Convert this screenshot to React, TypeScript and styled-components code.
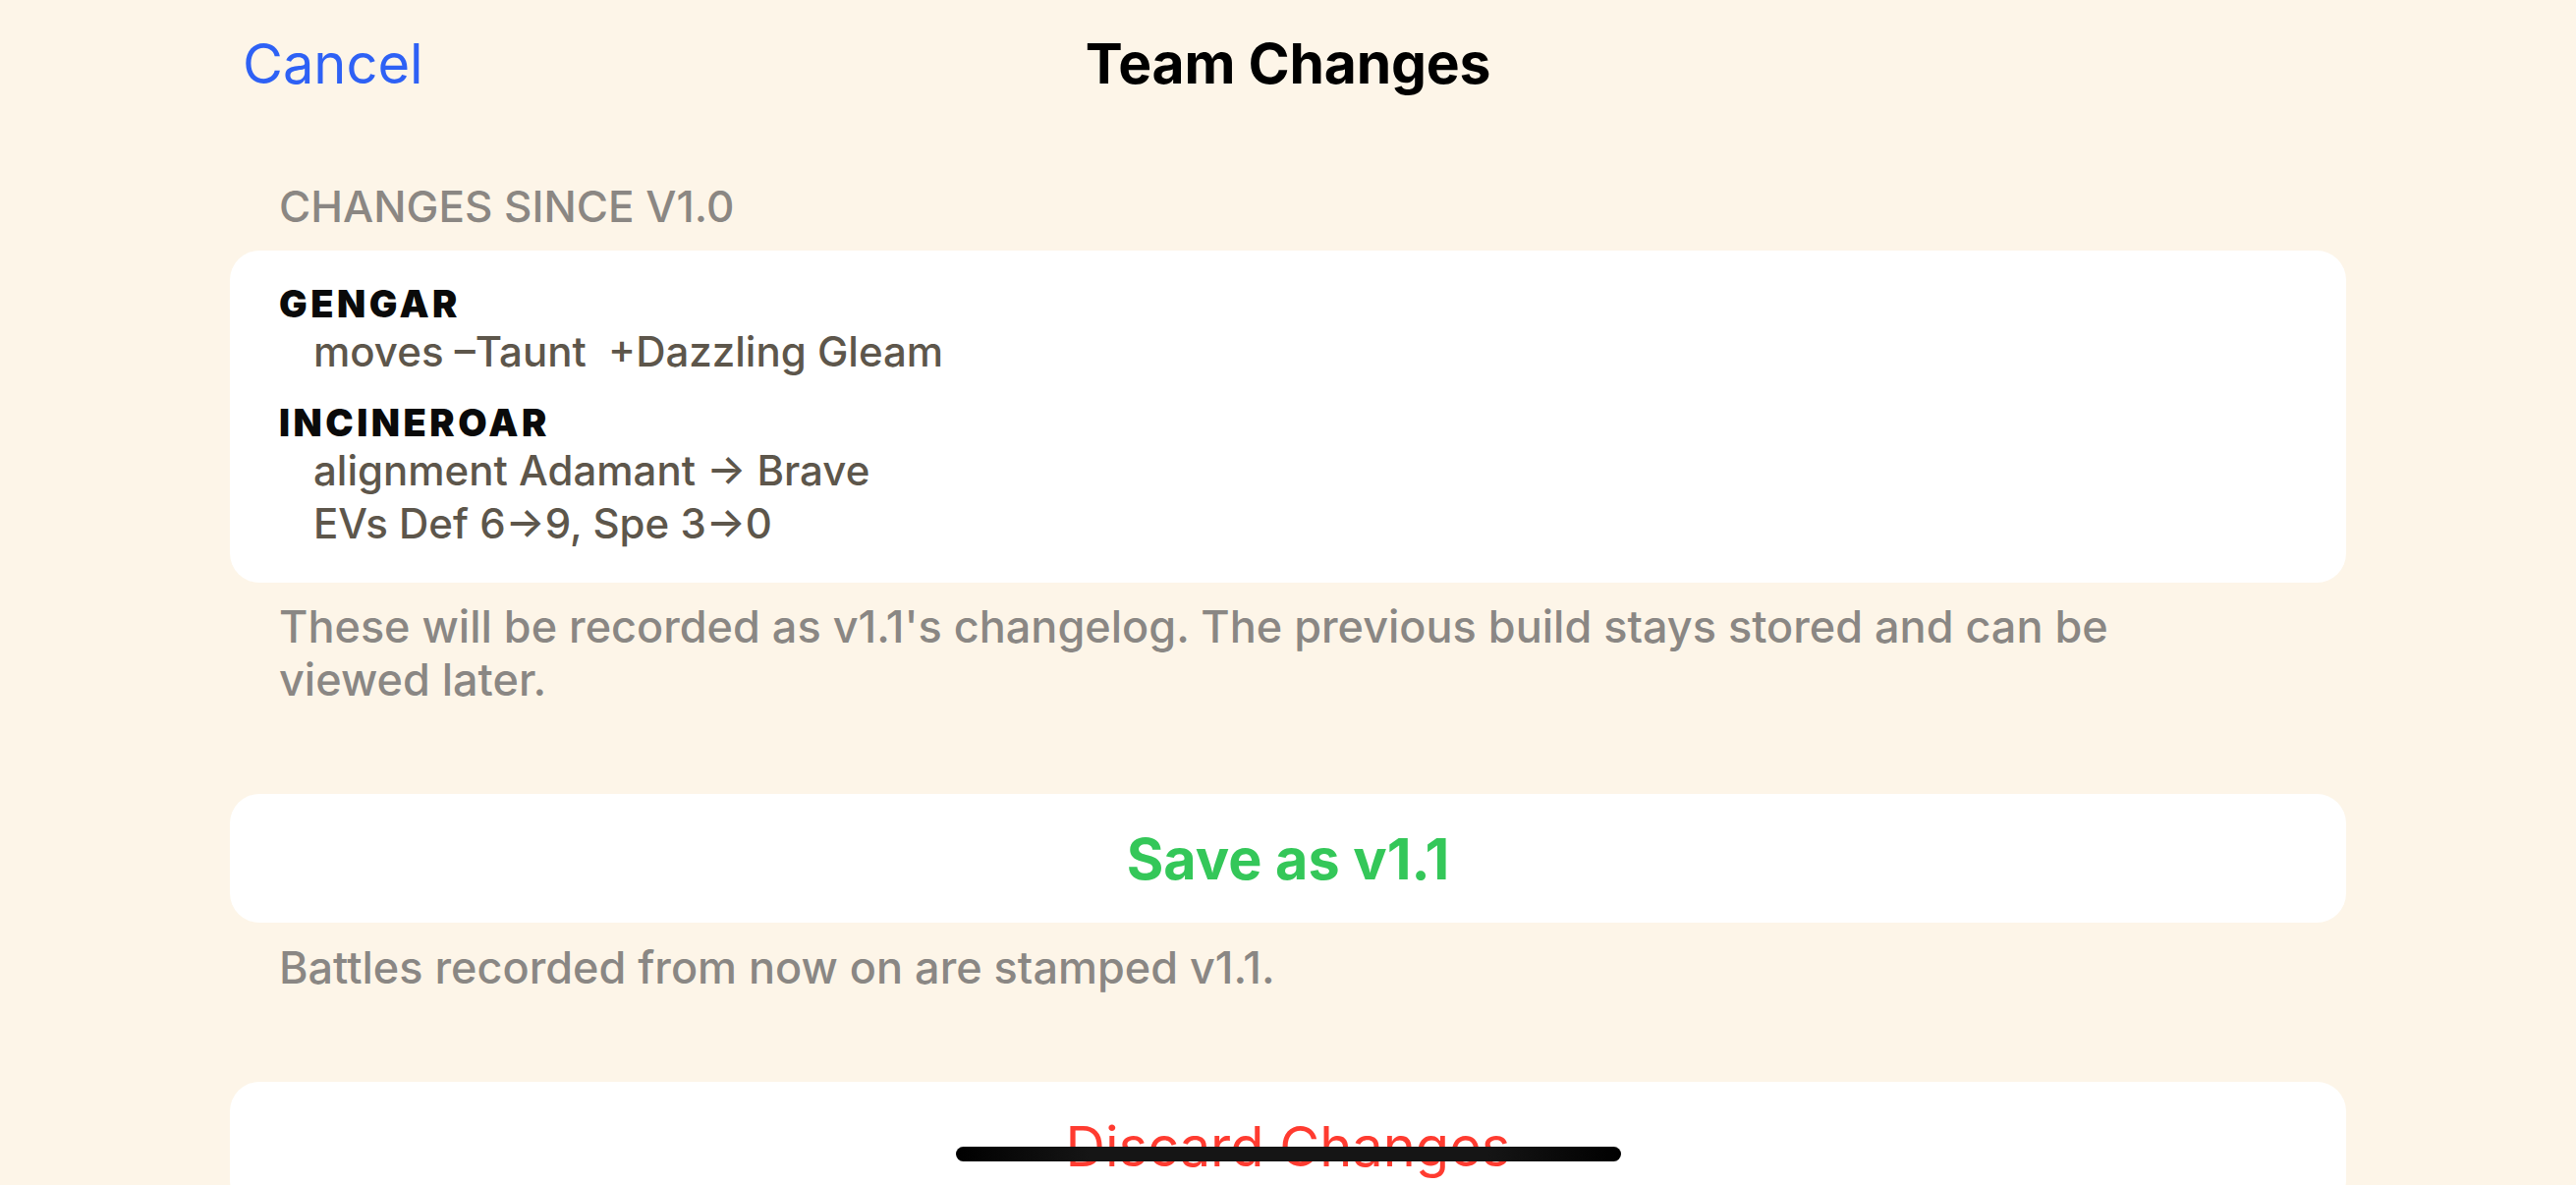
import styled, { createGlobalStyle } from "styled-components";

const GlobalStyle = createGlobalStyle`
  html, body {
    margin: 0;
    padding: 0;
    background: #fdf5e8;
    overflow: hidden;
  }
  body {
    font-family: Inter, "Noto Sans", "Liberation Sans", sans-serif;
    -webkit-font-smoothing: antialiased;
  }
`;

const Page = styled.div`
  min-height: 1206px;
  background: #fdf5e8;
`;

const NavBar = styled.header`
  display: grid;
  grid-template-columns: 1fr auto 1fr;
  align-items: center;
  padding: 31px 247px 0;
  height: 68px;
`;

const NavButton = styled.button`
  justify-self: start;
  border: 0;
  background: none;
  padding: 0;
  font-family: inherit;
  font-size: 56px;
  line-height: 68px;
  font-weight: 400;
  color: #2e61f5;
`;

const NavTitle = styled.h1`
  margin: 0;
  font-size: 57px;
  line-height: 68px;
  font-weight: 700;
  color: #000;
  letter-spacing: -0.2px;
`;

const Content = styled.main`
  display: flex;
  flex-direction: column;
  padding: 85px 234px 0;
`;

const SectionHeader = styled.div`
  padding-left: 50px;
  font-size: 44px;
  line-height: 53px;
  font-weight: 500;
  color: #8b8783;
  text-transform: uppercase;
  margin-bottom: 18px;
`;

const Card = styled.section`
  background: #fff;
  border-radius: 30px;
  padding: 33px 50px 33px;
`;

const Group = styled.div<{ $first?: boolean }>`
  margin-top: ${(p) => (p.$first ? "0" : "24px")};
`;

const Name = styled.div`
  font-size: 38px;
  line-height: 43px;
  font-weight: 900;
  letter-spacing: 3.5px;
  color: #0a0a0a;
`;

const Change = styled.div`
  padding-left: 35px;
  font-size: 42px;
  line-height: 54px;
  font-weight: 500;
  color: #5d564b;
  white-space: pre;
`;

const Footnote = styled.p<{ $gap?: number }>`
  margin: ${(p) => p.$gap ?? 18}px 0 0;
  padding: 0 120px 0 50px;
  font-size: 45px;
  line-height: 54px;
  font-weight: 500;
  color: #8a8784;
`;

const ActionButton = styled.button<{ $tone: "green" | "red"; $bold?: boolean }>`
  display: flex;
  align-items: center;
  justify-content: center;
  height: 131px;
  margin-top: 89px;
  border: 0;
  border-radius: 30px;
  background: #fff;
  font-family: inherit;
  font-size: ${(p) => (p.$bold ? 57.5 : 56)}px;
  line-height: 68px;
  font-weight: ${(p) => (p.$bold ? 700 : 400)};
  color: ${(p) => (p.$tone === "green" ? "#34c759" : "#ff3b30")};
`;

const HomeIndicator = styled.div`
  position: fixed;
  left: 50%;
  bottom: 24px;
  width: 677px;
  height: 15px;
  margin-left: -338px;
  border-radius: 8px;
  background: linear-gradient(90deg, #000 0%, #151515 20%, #151515 80%, #000 100%);
`;

const changes = [
  { name: "GENGAR", lines: ["moves \u2013Taunt  +Dazzling Gleam"] },
  {
    name: "INCINEROAR",
    lines: ["alignment Adamant \u2192 Brave", "EVs Def 6\u21929, Spe 3\u21920"],
  },
];

export default function App() {
  return (
    <Page>
      <GlobalStyle />
      <NavBar>
        <NavButton>Cancel</NavButton>
        <NavTitle>Team Changes</NavTitle>
        <span />
      </NavBar>
      <Content>
        <SectionHeader>Changes since v1.0</SectionHeader>
        <Card>
          {changes.map((c, i) => (
            <Group key={c.name} $first={i === 0}>
              <Name>{c.name}</Name>
              {c.lines.map((l) => (
                <Change key={l}>{l}</Change>
              ))}
            </Group>
          ))}
        </Card>
        <Footnote>
          These will be recorded as v1.1's changelog. The previous build stays stored and can be
          viewed later.
        </Footnote>
        <ActionButton $tone="green" $bold>
          Save as v1.1
        </ActionButton>
        <Footnote $gap={19}>Battles recorded from now on are stamped v1.1.</Footnote>
        <ActionButton $tone="red">Discard Changes</ActionButton>
      </Content>
      <HomeIndicator />
    </Page>
  );
}
